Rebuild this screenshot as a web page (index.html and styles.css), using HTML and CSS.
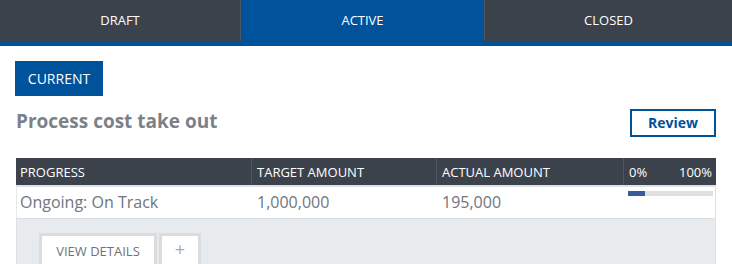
FILE: index.html
```html
<!DOCTYPE html>
<html>
<head>
<meta charset="utf-8">
<link rel="stylesheet" href="styles.css">
</head>
<body>
<nav class="tabs">
  <div class="tab">DRAFT</div>
  <div class="tab tab-active">ACTIVE</div>
  <div class="tab">CLOSED</div>
</nav>
<main class="content">
  <button class="btn-current">CURRENT</button>
  <div class="title-row">
    <h1 class="title">Process cost take out</h1>
    <button class="btn-review">Review</button>
  </div>
  <div class="table">
    <div class="thead">
      <div class="th">PROGRESS</div>
      <div class="th">TARGET AMOUNT</div>
      <div class="th">ACTUAL AMOUNT</div>
      <div class="th th-pct"><span>0%</span><span>100%</span></div>
    </div>
    <div class="trow">
      <div class="td">Ongoing: On Track</div>
      <div class="td">1,000,000</div>
      <div class="td">195,000</div>
      <div class="td td-bar"><div class="bar"><div class="bar-fill" style="width:20%"></div></div></div>
    </div>
    <div class="details">
      <button class="btn-details">VIEW DETAILS</button>
      <button class="btn-plus">+</button>
    </div>
  </div>
</main>
</body>
</html>
```

FILE: styles.css
```css
* { box-sizing: border-box; }
html, body { margin: 0; padding: 0; background: #fff; }
body { font-family: "Open Sans", "Noto Sans", sans-serif; overflow: hidden; }

.tabs {
  display: grid;
  grid-template-columns: 240px 244px 248px;
  height: 46px;
  border-bottom: 5px solid #00529b;
}
.tab {
  background: #3c424c;
  color: #fff;
  font-size: 13px;
  display: flex;
  align-items: center;
  justify-content: center;
  padding-bottom: 2px;
}
.tab + .tab { border-left: 1px solid #50565f; }
.tab-active { background: #00529b; border-left-color: #00529b; }
.tab-active + .tab { border-left-color: #50565f; }

.content { padding: 15px 16px 0 16px; }

.btn-current {
  display: block;
  width: 88px;
  height: 35px;
  margin-left: -1px;
  background: #00529b;
  color: #fff;
  border: none;
  font-family: inherit;
  font-size: 14px;
  padding: 0 0 1px 0;
}

.title-row {
  display: flex;
  justify-content: space-between;
  align-items: center;
  margin-top: 12px;
}
.title {
  margin: 0;
  font-size: 19px;
  font-weight: 700;
  color: #7b8187;
  padding-bottom: 3px;
  line-height: 26px;
}
.btn-review {
  width: 86px;
  height: 28px;
  background: #fff;
  border: 2px solid #00529b;
  color: #00529b;
  font-family: inherit;
  font-weight: 700;
  font-size: 14px;
  padding: 0 0 1px 0;
}

.table { margin-top: 21px; width: 700px; }
.thead {
  display: grid;
  grid-template-columns: 235px 185px 187px 93px;
  height: 27px;
  background: #3c424c;
}
.th {
  color: #fff;
  font-size: 13px;
  display: flex;
  align-items: center;
  padding: 0 4px 0 5px;
}
.th:first-child { padding-left: 4px; }
.th + .th { border-left: 1px solid #50565f; }
.th-pct { justify-content: space-between; padding-right: 4px; }

.trow {
  display: grid;
  grid-template-columns: 235px 185px 187px 93px;
  height: 33px;
  border-top: 2px solid #dfe2e5;
  border-left: 1px solid #e6e8eb;
  border-right: 1px solid #dfe2e5;
  background: #fff;
}
.td {
  font-size: 16px;
  color: #6e767e;
  display: flex;
  align-items: center;
  padding: 0 4px 1px 5px;
}
.td:first-child { padding-left: 3px; }
.td-bar { align-items: flex-start; padding-top: 4px; padding-left: 4px; }
.bar {
  width: 85px;
  height: 5px;
  background: #e0e0e0;
}
.bar-fill { height: 100%; background: #3a5a9a; }

.details {
  display: flex;
  align-items: flex-start;
  gap: 2px;
  background: #e8ebee;
  border-top: 1px solid #dadde1;
  border-left: 1px solid #dfe2e5;
  border-right: 1px solid #dfe2e5;
  padding: 14px 0 0 22px;
  height: 47px;
}
.btn-details, .btn-plus {
  height: 32px;
  background: #fff;
  border: 3px solid #dcdcdc;
  border-bottom: none;
  font-family: inherit;
  font-size: 13px;
  color: #6b747d;
  padding: 0;
}
.btn-details { width: 118px; }
.btn-plus { width: 42px; font-size: 18px; color: #a3adb5; padding-bottom: 4px; }
```
